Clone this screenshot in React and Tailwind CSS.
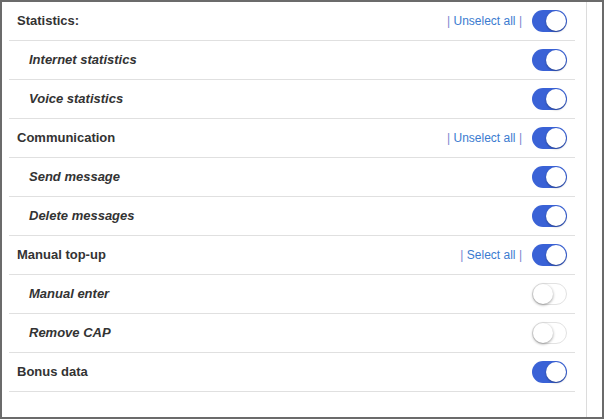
import React from "react";

const rows = [
  { label: "Statistics:", header: true, action: "Unselect all", on: true },
  { label: "Internet statistics", on: true },
  { label: "Voice statistics", on: true },
  { label: "Communication", header: true, action: "Unselect all", on: true },
  { label: "Send message", on: true },
  { label: "Delete messages", on: true },
  { label: "Manual top-up", header: true, action: "Select all", on: true },
  { label: "Manual enter", on: false },
  { label: "Remove CAP", on: false },
  { label: "Bonus data", header: true, on: true },
];

function Toggle({ on }) {
  return on ? (
    <div className="w-[35px] h-[22px] rounded-full bg-[#3a62d6] flex items-center justify-end pr-[1px]">
      <div className="w-[20px] h-[20px] rounded-full bg-white shadow-[0_1px_2px_rgba(0,0,0,0.35)]" />
    </div>
  ) : (
    <div className="w-[35px] h-[22px] rounded-full bg-white border border-[#e2e2e2] flex items-center justify-start">
      <div className="w-[20px] h-[20px] rounded-full bg-white shadow-[0_1px_3px_rgba(0,0,0,0.4)]" />
    </div>
  );
}

export default function App() {
  return (
    <div
      className="w-[604px] h-[419px] border-2 border-[#6b6b6b] bg-white flex"
      style={{ fontFamily: '"Liberation Sans", Arial, sans-serif' }}
    >
      <div className="flex-1 border-r border-[#dcdcdc] pl-[7px] pr-[11px]">
        {rows.map((r, i) => (
          <div
            key={i}
            className="h-[39px] border-b border-[#e0e0e0] flex items-center pr-[8px]"
          >
            <span
              className={`text-[13px] font-bold text-[#333333] ${
                r.header ? "pl-[8px]" : "pl-[20px] italic"
              }`}
            >
              {r.label}
            </span>
            <div className="flex-1" />
            {r.action && (
              <span className="text-[12px] text-[#3b7bd0] mr-[10px]">
                <span className="text-[#7b86d0]">|</span> {r.action}{" "}
                <span className="text-[#7b86d0]">|</span>
              </span>
            )}
            <Toggle on={r.on} />
          </div>
        ))}
      </div>
      <div className="w-[15px]" />
    </div>
  );
}
